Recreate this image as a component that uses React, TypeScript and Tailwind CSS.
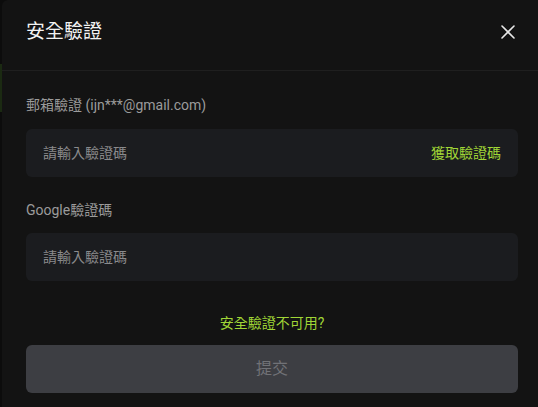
import { X } from 'lucide-react';

const font = { fontFamily: 'Roboto, "Noto Sans CJK TC", sans-serif' };

const CodeField = ({ placeholder, action }: { placeholder: string; action?: string }) => (
  <div className="flex h-12 items-center justify-between rounded-[6px] bg-[#1b1c1f] pl-[17px] pr-[17px]">
    <input
      className="min-w-0 flex-1 bg-transparent text-[14px] text-white outline-none placeholder:text-[#8a8a8c]"
      placeholder={placeholder}
      style={font}
    />
    {action && <button className="text-[14px] text-[#a0d636]">{action}</button>}
  </div>
);

export default function App() {
  return (
    <div className="flex h-[407px] w-[538px] overflow-hidden bg-[#0c0c0c]" style={font}>
      {/* backdrop sliver on the left */}
      <div className="flex w-[2px] shrink-0 flex-col">
        <div className="h-[64px]" />
        <div className="h-[48px] bg-[#1b2a12]" />
      </div>

      {/* Modal */}
      <div className="w-[540px] shrink-0 rounded-tl-md bg-[#131313]">
        <div className="flex h-[71px] items-start justify-between border-b border-[#1f1f1f] px-6 pt-[18px]">
          <h2 className="text-[19px] leading-7 text-[#f2f2f2]">安全驗證</h2>
          <button className="-mr-[2px] mt-[2px] text-[#e8e8e8]">
            <X size={24} strokeWidth={1.6} />
          </button>
        </div>

        <div className="px-6 pt-6">
          <div className="mb-[14px] text-[14px] leading-5 text-[#9b9b9b]">郵箱驗證 (ijn***@gmail.com)</div>
          <CodeField placeholder="請輸入驗證碼" action="獲取驗證碼" />

          <div className="mb-[13px] mt-[23px] text-[14px] leading-5 text-[#9b9b9b]">Google驗證碼</div>
          <CodeField placeholder="請輸入驗證碼" />

          <div className="mt-8 text-center text-[14px] leading-5 text-[#a0d636]">安全驗證不可用?</div>

          <button className="mt-3 flex h-12 w-full items-center justify-center rounded-[6px] bg-[#3d3e43] text-[16px] text-[#717277]">
            提交
          </button>
        </div>
      </div>
    </div>
  );
}
